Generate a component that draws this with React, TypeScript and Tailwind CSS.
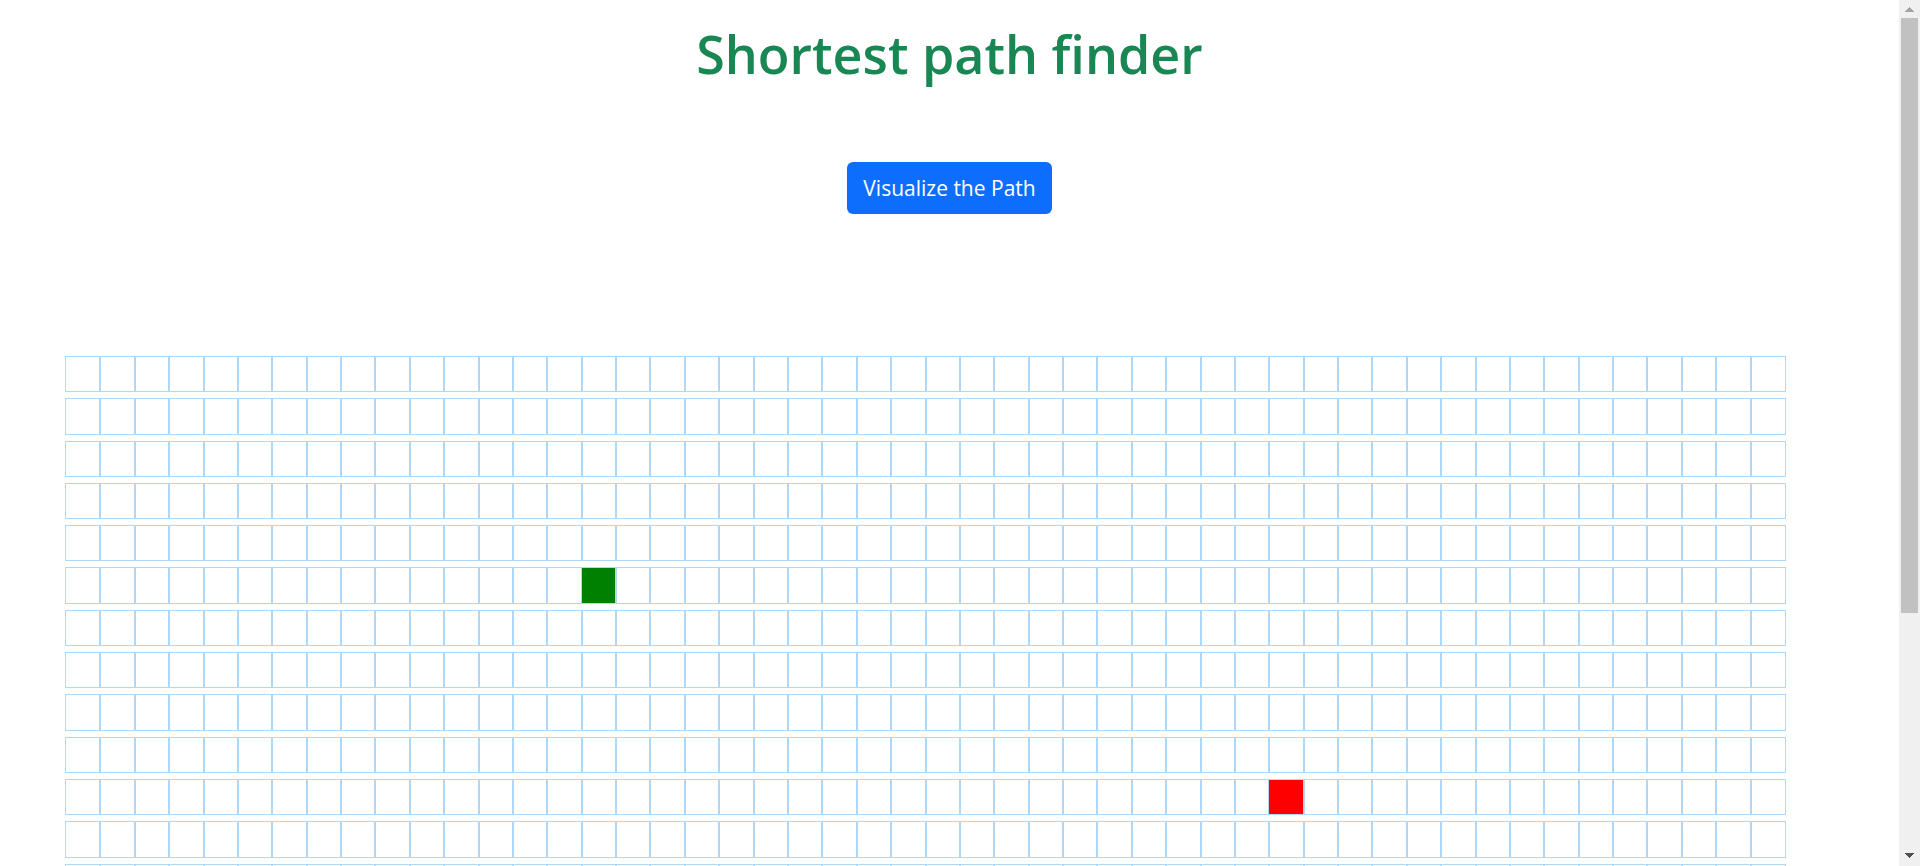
const ROWS = 20;
const COLUMNS = 50;
const START = { row: 5, column: 15 };
const FINISH = { row: 10, column: 35 };

function Cell({ row, column }: { row: number; column: number }) {
  if (row === START.row && column === START.column) {
    return <div aria-label="Start" className="border border-l-0 border-[#afd8f8] bg-[#008000]" />;
  }
  if (row === FINISH.row && column === FINISH.column) {
    return <div aria-label="Finish" className="border border-l-0 border-[#afd8f8] bg-[#ff0000]" />;
  }
  if (column === 0) {
    return <div className="-ml-px border border-[#afd8f8]" />;
  }
  if (column === COLUMNS - 1) {
    return <div className="-mr-px border border-[#afd8f8]" />;
  }
  return <div className="border border-[#afd8f8]" />;
}

function Scrollbar() {
  return (
    <div aria-hidden="true" className="flex w-[21px] shrink-0 flex-col items-center bg-[#f0f0f0]">
      <div className="flex h-[18px] shrink-0 items-center justify-center">
        <svg width="9" height="5" viewBox="0 0 9 5" shapeRendering="crispEdges" fill="#a3a3a3">
          <path d="M4 0h1v1h1v1h1v1h1v1h1v1H0V4h1V3h1V2h1V1h1z" />
        </svg>
      </div>
      <div className="flex w-[17px] grow flex-col">
        <div className="h-[72%] bg-[#c1c1c1]" />
      </div>
      <div className="flex h-[22px] shrink-0 items-center justify-center">
        <svg width="9" height="5" viewBox="0 0 9 5" shapeRendering="crispEdges" fill="#505050">
          <path d="M0 0h9v1H8v1H7v1H6v1H5v1H4V4H3V3H2V2H1V1H0z" />
        </svg>
      </div>
    </div>
  );
}

export default function App() {
  const cells = Array.from({ length: ROWS * COLUMNS }, (_, i) => ({
    row: Math.floor(i / COLUMNS),
    column: i % COLUMNS,
  }));

  return (
    <div className="flex h-screen bg-white font-['Open_Sans','Noto_Sans',sans-serif]">
      <main className="min-w-0 grow overflow-y-auto [scrollbar-width:none]">
        <header className="flex flex-col items-center pt-5">
          <h1 className="text-[52px] leading-[68px] font-semibold text-[#198754]">Shortest path finder</h1>
          <button
            type="button"
            className="mt-[74px] h-[52px] rounded-md bg-[#0d6efd] px-4 text-[21px] leading-8 text-white"
          >
            Visualize the Path
          </button>
        </header>
        <div className="mt-[142px] mr-[114px] ml-[66px] grid h-[840px] grid-cols-[repeat(50,minmax(0,1fr))] grid-rows-[repeat(20,minmax(0,1fr))] gap-y-[6px]">
          {cells.map(({ row, column }) => (
            <Cell key={`${row}-${column}`} row={row} column={column} />
          ))}
        </div>
      </main>
      <Scrollbar />
    </div>
  );
}
